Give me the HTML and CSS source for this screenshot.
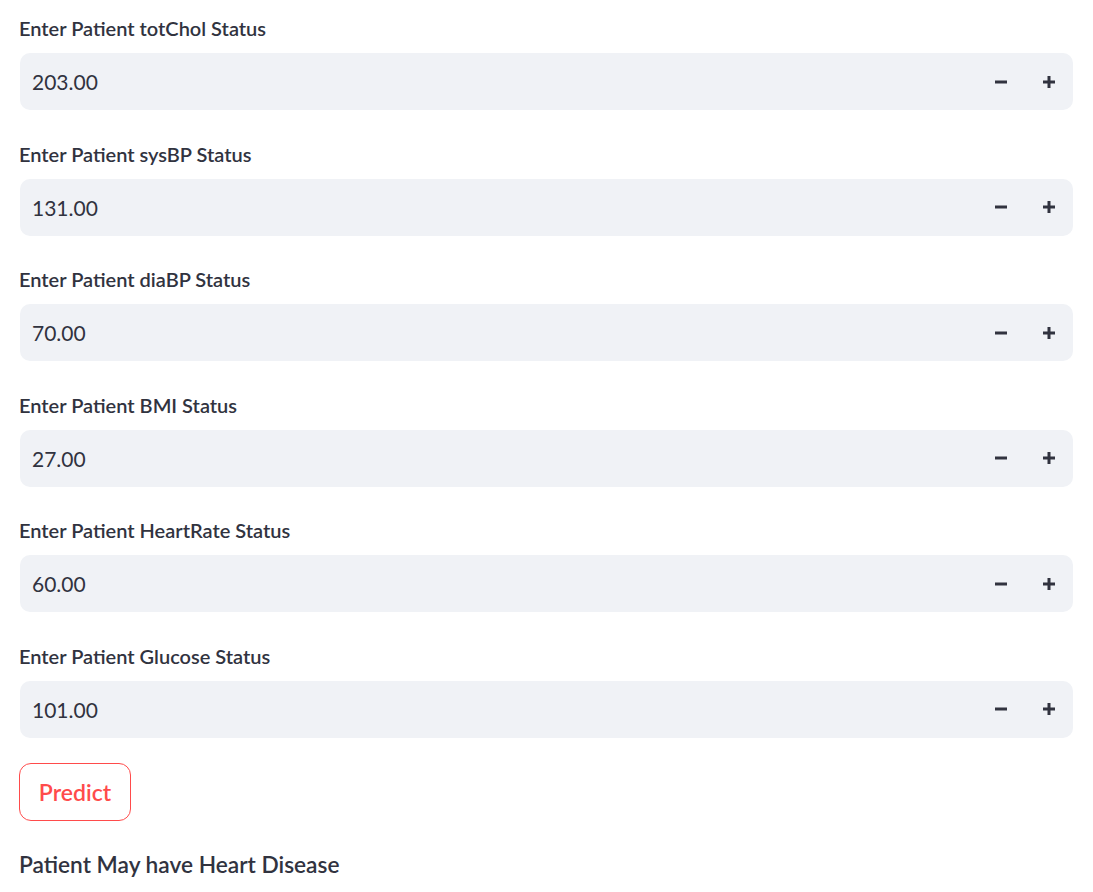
FILE: index.html
```html
<!DOCTYPE html>
<html>
<head>
<meta charset="utf-8">
<link rel="stylesheet" href="styles.css">
</head>
<body>
<main class="page">
  <div class="form">
    <div class="field">
      <label class="label">Enter Patient totChol Status</label>
      <div class="input">
        <span class="value">203.00</span>
        <button class="step"><svg width="12" height="12" viewBox="0 0 12 12"><rect x="0" y="4.5" width="12" height="3" fill="currentColor"/></svg></button>
        <button class="step"><svg width="12" height="12" viewBox="0 0 12 12"><rect x="0" y="4.5" width="12" height="3" fill="currentColor"/><rect x="4.5" y="0" width="3" height="12" fill="currentColor"/></svg></button>
      </div>
    </div>
    <div class="field">
      <label class="label">Enter Patient sysBP Status</label>
      <div class="input">
        <span class="value">131.00</span>
        <button class="step"><svg width="12" height="12" viewBox="0 0 12 12"><rect x="0" y="4.5" width="12" height="3" fill="currentColor"/></svg></button>
        <button class="step"><svg width="12" height="12" viewBox="0 0 12 12"><rect x="0" y="4.5" width="12" height="3" fill="currentColor"/><rect x="4.5" y="0" width="3" height="12" fill="currentColor"/></svg></button>
      </div>
    </div>
    <div class="field">
      <label class="label">Enter Patient diaBP Status</label>
      <div class="input">
        <span class="value">70.00</span>
        <button class="step"><svg width="12" height="12" viewBox="0 0 12 12"><rect x="0" y="4.5" width="12" height="3" fill="currentColor"/></svg></button>
        <button class="step"><svg width="12" height="12" viewBox="0 0 12 12"><rect x="0" y="4.5" width="12" height="3" fill="currentColor"/><rect x="4.5" y="0" width="3" height="12" fill="currentColor"/></svg></button>
      </div>
    </div>
    <div class="field">
      <label class="label">Enter Patient BMI Status</label>
      <div class="input">
        <span class="value">27.00</span>
        <button class="step"><svg width="12" height="12" viewBox="0 0 12 12"><rect x="0" y="4.5" width="12" height="3" fill="currentColor"/></svg></button>
        <button class="step"><svg width="12" height="12" viewBox="0 0 12 12"><rect x="0" y="4.5" width="12" height="3" fill="currentColor"/><rect x="4.5" y="0" width="3" height="12" fill="currentColor"/></svg></button>
      </div>
    </div>
    <div class="field">
      <label class="label">Enter Patient HeartRate Status</label>
      <div class="input">
        <span class="value">60.00</span>
        <button class="step"><svg width="12" height="12" viewBox="0 0 12 12"><rect x="0" y="4.5" width="12" height="3" fill="currentColor"/></svg></button>
        <button class="step"><svg width="12" height="12" viewBox="0 0 12 12"><rect x="0" y="4.5" width="12" height="3" fill="currentColor"/><rect x="4.5" y="0" width="3" height="12" fill="currentColor"/></svg></button>
      </div>
    </div>
    <div class="field">
      <label class="label">Enter Patient Glucose Status</label>
      <div class="input">
        <span class="value">101.00</span>
        <button class="step"><svg width="12" height="12" viewBox="0 0 12 12"><rect x="0" y="4.5" width="12" height="3" fill="currentColor"/></svg></button>
        <button class="step"><svg width="12" height="12" viewBox="0 0 12 12"><rect x="0" y="4.5" width="12" height="3" fill="currentColor"/><rect x="4.5" y="0" width="3" height="12" fill="currentColor"/></svg></button>
      </div>
    </div>
  </div>
  <div class="actions">
    <button class="predict">Predict</button>
  </div>
  <p class="result">Patient May have Heart Disease</p>
</main>
</body>
</html>
```
FILE: styles.css
```css
html, body {
  margin: 0;
  padding: 0;
  background: #ffffff;
}
.page {
  padding: 17px 20px 0 20px;
  font-family: Lato, "Noto Sans", sans-serif;
  color: rgb(49, 51, 63);
  display: flex;
  flex-direction: column;
}
.form {
  display: flex;
  flex-direction: column;
  gap: 32.6px;
}
.field {
  display: flex;
  flex-direction: column;
}
.label {
  display: block;
  height: 22px;
  line-height: 22px;
  font-size: 20px;
  font-weight: 600;
  margin-left: -1px;
  margin-bottom: 14px;
}
.input {
  height: 57px;
  background: rgb(240, 242, 246);
  border-radius: 10px;
  display: flex;
  align-items: center;
  padding-left: 12px;
}
.value {
  flex: 1;
  font-size: 21px;
  font-weight: 400;
}
.step {
  width: 48px;
  height: 57px;
  border: none;
  background: transparent;
  color: rgb(49, 51, 63);
  display: flex;
  align-items: center;
  justify-content: center;
  padding: 0;
}
.actions {
  margin-top: 25px;
  display: flex;
}
.predict {
  margin-left: -1px;
  width: 112px;
  height: 58px;
  border: 1px solid rgb(255, 75, 75);
  border-radius: 12px;
  background: #ffffff;
  color: rgb(255, 75, 75);
  font-family: Lato, "Noto Sans", sans-serif;
  font-size: 23px;
  font-weight: 600;
  padding: 0;
}
.result {
  margin: 30px 0 0 -1px;
  line-height: 28px;
  font-size: 22.7px;
  font-weight: 600;
}
```
